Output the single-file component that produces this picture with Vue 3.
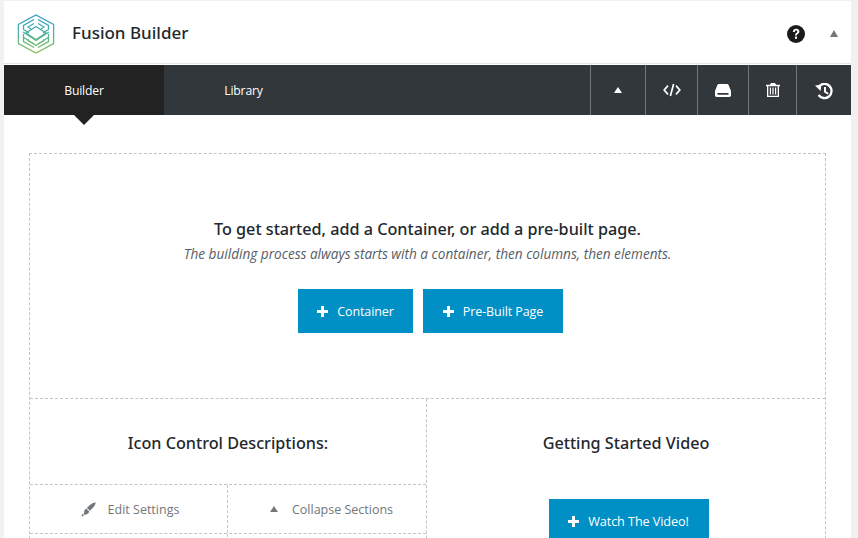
<script setup>
const controls = [
  { label: 'Edit Settings', icon: 'pen' },
  { label: 'Collapse Sections', icon: 'tri' }
]
</script>

<template>
  <div class="page">
    <div class="card">
      <header class="head">
        <svg class="logo" width="38" height="40" viewBox="0 0 38 40" fill="none">
          <defs>
            <linearGradient id="lg" gradientUnits="userSpaceOnUse" x1="0" y1="0" x2="0" y2="40">
              <stop offset="0" stop-color="#2f9ccf" />
              <stop offset="0.5" stop-color="#4fb3a0" />
              <stop offset="1" stop-color="#8cc152" />
            </linearGradient>
          </defs>
          <g stroke="url(#lg)" stroke-width="1.3">
            <path d="M19 1 36.6 10.5V29.5L19 39 1.4 29.5V10.5Z" />
            <path d="M19 12.5 29 19 19 25.5 9 19Z" />
            <path d="M17 5.5 6.5 11.5V15.5L12 19M21 5.5 31.5 11.5V15.5L26 19M17 9.5 11 13 14.5 15.5M21 9.5 27 13 23.5 15.5" />
            <path d="M6.5 20V27.5L17 33.5M31.5 20V27.5L21 33.5M11 25V26.5L17 30M27 25V26.5L21 30" />
            <path d="M6 18 19 26.5 32 18M6 23 19 31.5 32 23" />
          </g>
        </svg>
        <h1 class="title">Fusion Builder</h1>
        <div class="head-tools">
          <svg class="help" width="18" height="18" viewBox="0 0 18 18">
            <circle cx="9" cy="9" r="9" fill="#1b1b1b" />
            <path d="M5.9 6.9C6 4.9 7.3 3.7 9.2 3.7 11 3.7 12.4 4.9 12.4 6.5 12.4 7.8 11.7 8.4 10.8 9 10.1 9.5 9.9 9.8 9.9 10.6H8C8 9.3 8.4 8.7 9.3 8.1 10 7.6 10.4 7.2 10.4 6.6 10.4 5.9 9.9 5.5 9.2 5.5 8.4 5.5 7.9 6 7.8 6.9Z" fill="#fff" />
            <rect x="7.9" y="11.6" width="2.1" height="2.2" fill="#fff" />
          </svg>
          <span class="head-tri"></span>
        </div>
      </header>

      <nav class="bar">
        <div class="tab active">Builder</div>
        <div class="tab lib">Library</div>
        <div class="tools">
          <div class="tool w55"><span class="tool-tri"></span></div>
          <div class="tool w52">
            <svg width="18" height="14" viewBox="0 0 18 14" fill="none" stroke="#fff" stroke-width="1.7">
              <path d="M5 2.6 1.2 7 5 11.4M13 2.6 16.8 7 13 11.4M10.6 1 7.4 13" />
            </svg>
          </div>
          <div class="tool w51">
            <svg width="16" height="13" viewBox="0 0 16 13">
              <path fill="#fff" fill-rule="evenodd" d="M4 0H12C12.8 0 13.3.4 13.6 1L15.7 6.2C15.9 6.6 16 7 16 7.5V11.3C16 12.3 15.3 13 14.4 13H1.6C.7 13 0 12.3 0 11.3V7.5C0 7 .1 6.6.3 6.2L2.4 1C2.7.4 3.2 0 4 0ZM2.5 9V10.7H13.5V9Z" />
            </svg>
          </div>
          <div class="tool w48">
            <svg class="trash" width="14" height="14" viewBox="0 0 14 14">
              <path fill="#fff" fill-rule="evenodd" d="M0 1.8H4L5 0H9L10 1.8H14V3.2H13V14H1V3.2H0ZM2.3 3.2V12.8H11.7V3.2ZM3.8 4.4H5V11.6H3.8ZM6.4 4.4H7.6V11.6H6.4ZM9 4.4H10.2V11.6H9Z" />
            </svg>
          </div>
          <div class="tool w55">
            <svg class="hist" width="18" height="17" viewBox="0 0 18 17" fill="none">
              <path d="M4.2 3.2A7.1 7.1 0 1 1 3.6 12" stroke="#fff" stroke-width="2.3" />
              <path d="M0 2.6 6.4 1.8 5.6 8Z" fill="#fff" />
              <path d="M10 4V8.8L13.2 10.8" stroke="#fff" stroke-width="1.9" />
            </svg>
          </div>
        </div>
      </nav>
      <div class="pointer-row"><span class="pointer"></span></div>

      <main class="builder">
        <section class="intro">
          <h2 class="intro-title">To get started, add a Container, or add a pre-built page.</h2>
          <p class="intro-sub">The building process always starts with a container, then columns, then elements.</p>
          <div class="btns">
            <a class="btn b115"><span class="plus"></span>Container</a>
            <a class="btn b140"><span class="plus"></span>Pre-Built Page</a>
          </div>
        </section>

        <section class="split">
          <div class="left">
            <h3 class="sec-title desc">Icon Control Descriptions:</h3>
            <div class="control-row">
              <div v-for="c in controls" :key="c.label" class="control">
                <svg v-if="c.icon === 'pen'" class="ctrl-pen" width="15" height="15" viewBox="0 0 15 15">
                  <path fill="#72777c" d="M14.6 0.6C14.9 1.5 13.6 3.8 11.6 6.1L9 8.7 5.9 5.9 8.5 3.3C10.8 1.3 13.7 0.1 14.6 0.6ZM5.2 6.6 8.3 9.5 7.2 11.5 3.8 13 2.5 11.7 2 12.2 3 13.3 1.2 14.6 0.3 13.8 1.6 11.9 2.1 12.1 3.4 10.5 3 10.1 3.8 7.7Z" />
                </svg>
                <span v-else class="ctrl-tri"></span>
                <span class="ctrl-label">{{ c.label }}</span>
              </div>
            </div>
            <div class="control-next"></div>
          </div>
          <div class="right">
            <h3 class="sec-title video">Getting Started Video</h3>
            <a class="btn b160"><span class="plus"></span>Watch The Video!</a>
          </div>
        </section>
      </main>
    </div>
  </div>
</template>

<style>
html, body { margin: 0; background: #f1f1f1; overflow: hidden; }
</style>

<style scoped>
.page {
  width: 858px;
  height: 538px;
  overflow: hidden;
  background: #f1f1f1;
  padding: 1px 7px 0 4px;
  box-sizing: border-box;
  font-family: "Open Sans", "Noto Sans", sans-serif;
}
.card { background: #fff; height: 600px; }
.head {
  height: 61px;
  padding-top: 1px;
  display: flex;
  align-items: center;
  padding-left: 13px;
  border-bottom: 1px solid #e5e5e5;
  box-sizing: content-box;
}
.logo { margin-top: 2px; }
.title {
  margin: 0 0 0 17px;
  font-family: "Noto Sans", sans-serif;
  font-size: 17px;
  font-weight: 500;
  color: #23282d;
}
.head-tools { margin-left: auto; display: flex; align-items: center; }
.help { margin: 2px 25px 0 0; }
.head-tri {
  width: 0; height: 0; margin: 1px 13px 0 0;
  border-left: 4.5px solid transparent;
  border-right: 4.5px solid transparent;
  border-bottom: 7px solid #72777c;
}
.bar {
  height: 50px;
  display: flex;
  background: #32373c;
  margin-top: 1px;
}
.tab {
  width: 160px;
  box-sizing: border-box;
  display: flex;
  align-items: center;
  justify-content: center;
  color: #fff;
  font-size: 12.2px;
  font-weight: 500;
  letter-spacing: -0.2px;
}
.tab.active { background: #222; }
.tab.lib { padding-right: 1px; }
.tools { margin-left: auto; display: flex; }
.tool {
  display: flex;
  align-items: center;
  justify-content: center;
  border-left: 1px solid #72777c;
  box-sizing: border-box;
}
.w55 { width: 55px; }
.w52 { width: 52px; }
.w51 { width: 51px; }
.w48 { width: 48px; }
.trash { margin-top: -1px; }
.hist { margin-top: 2px; }
.tool-tri {
  width: 0; height: 0;
  border-left: 4.5px solid transparent;
  border-right: 4.5px solid transparent;
  border-bottom: 6px solid #fff;
}
.pointer-row { height: 38px; padding-left: 70px; }
.pointer {
  display: block; width: 0; height: 0;
  border-left: 10px solid transparent;
  border-right: 10px solid transparent;
  border-top: 10px solid #222;
}
.builder {
  margin: 0 25px;
  border: 1px dashed #c4c4c4;
  border-bottom: 0;
}
.intro {
  height: 244px;
  display: flex;
  flex-direction: column;
  align-items: center;
  border-bottom: 1px dashed #c4c4c4;
}
.intro-title {
  margin: 64px 0 0;
  font-family: "Noto Sans", sans-serif;
  font-size: 16.2px;
  line-height: 22px;
  font-weight: 500;
  color: #23282d;
}
.intro-sub {
  margin: 5px 0 0;
  font-size: 13.6px;
  line-height: 18px;
  font-style: italic;
  color: #555d66;
}
.btns { margin: 26px 0 0 6px; display: flex; gap: 10px; }
.btn {
  height: 44px;
  display: flex;
  align-items: center;
  justify-content: center;
  background: #0090c6;
  color: #fff;
  font-size: 12.5px;
  letter-spacing: -0.1px;
}
.b115 { width: 115px; }
.b140 { width: 140px; }
.b160 { width: 160px; margin-left: 5px; font-size: 12.7px; font-weight: 500; }
.plus {
  width: 11px; height: 11px; margin-right: 9px;
  background:
    linear-gradient(#fff, #fff) center / 11px 3px no-repeat,
    linear-gradient(#fff, #fff) center / 3px 11px no-repeat;
}
.split { display: flex; }
.left { width: 396px; border-right: 1px dashed #c4c4c4; }
.right { flex: 1; display: flex; flex-direction: column; align-items: center; }
.sec-title {
  margin: 0;
  font-family: "Noto Sans", sans-serif;
  font-size: 16.2px;
  line-height: 22px;
  font-weight: 500;
  color: #23282d;
  text-align: center;
}
.desc { padding: 33px 0 30px; border-bottom: 1px dashed #c4c4c4; }
.video { padding-top: 33px; margin-bottom: 45px; }
.control-row { display: flex; height: 48px; border-bottom: 1px dashed #c4c4c4; }
.control {
  display: flex;
  align-items: center;
  justify-content: center;
  color: #72777c;
  font-size: 12.5px;
  box-sizing: border-box;
  flex: 0 0 197px;
  padding-left: 3px;
}
.control + .control { flex: 1; padding-left: 9px; border-left: 1px dashed #c4c4c4; }
.ctrl-pen { margin-right: 12px; }
.ctrl-tri {
  width: 0; height: 0; margin-right: 14px;
  border-left: 4px solid transparent;
  border-right: 4px solid transparent;
  border-bottom: 6px solid #72777c;
}
.control-next { height: 40px; width: 197px; border-right: 1px dashed #c4c4c4; }
</style>
